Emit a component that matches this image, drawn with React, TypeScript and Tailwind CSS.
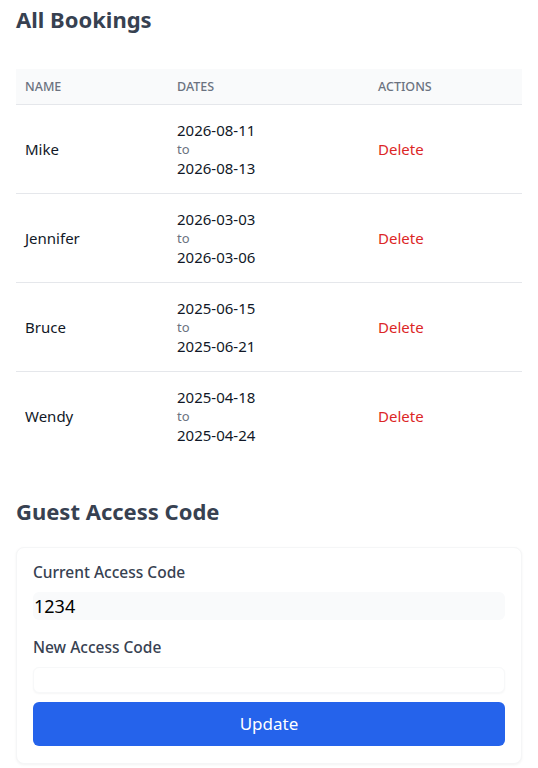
import React from "react";

const bookings = [
  { name: "Mike", from: "2026-08-11", to: "2026-08-13" },
  { name: "Jennifer", from: "2026-03-03", to: "2026-03-06" },
  { name: "Bruce", from: "2025-06-15", to: "2025-06-21" },
  { name: "Wendy", from: "2025-04-18", to: "2025-04-24" },
];

export default function App() {
  return (
    <div
      className="min-h-screen bg-white px-4 pt-[5px] text-[15px] text-[#111827]"
      style={{ fontFamily: '"Noto Sans", "Open Sans", sans-serif' }}
    >
      <h2 className="text-[22px] font-bold leading-[28px] text-[#374151]">All Bookings</h2>

      <table className="mt-[36px] w-full border-collapse table-fixed">
        <thead>
          <tr className="bg-[#f9fafb] border-b border-[#e5e7eb]">
            <th className="w-[153px] pl-[9px] pr-2 py-[10px] text-left text-[12.5px] font-medium leading-[15px] uppercase text-[#6b7280]">
              Name
            </th>
            <th className="w-[201px] px-2 py-[10px] text-left text-[12.5px] font-medium leading-[15px] uppercase text-[#6b7280]">
              Dates
            </th>
            <th className="px-2 py-[10px] text-left text-[12.5px] font-medium leading-[15px] uppercase text-[#6b7280]">
              Actions
            </th>
          </tr>
        </thead>
        <tbody>
          {bookings.map((b, i) => (
            <tr
              key={b.name}
              className={i < bookings.length - 1 ? "border-b border-[#e5e7eb]" : ""}
            >
              <td className="pl-[9px] pr-2 py-[15px] align-middle leading-5">{b.name}</td>
              <td className="px-2 py-[15px] align-middle">
                <div className="leading-5">{b.from}</div>
                <div className="text-[13px] leading-[18px] text-[#6b7280]">to</div>
                <div className="leading-5">{b.to}</div>
              </td>
              <td className="px-2 py-[15px] align-middle leading-5">
                <span className="text-[#dc2626]">Delete</span>
              </td>
            </tr>
          ))}
        </tbody>
      </table>

      <h2 className="mt-[37px] text-[22px] font-bold leading-[28px] text-[#374151]">
        Guest Access Code
      </h2>

      <div className="mt-[22px] rounded-lg border border-[#f5f6f7] bg-white px-[16px] pt-[14px] pb-[17px] shadow-[0_1px_3px_rgba(0,0,0,0.05)]">
        <label className="block text-[15.5px] font-medium leading-5 text-[#374151]">
          Current Access Code
        </label>
        <div className="mt-[10px] flex h-[28px] items-center rounded-md bg-[#f9fafb] pl-px text-lg text-black">
          1234
        </div>
        <label className="mt-[17px] block text-[15.5px] font-medium leading-5 text-[#374151]">
          New Access Code
        </label>
        <div className="mt-[10px] h-[26px] rounded-md border border-[#f7f8f9] bg-white shadow-[0_1px_2px_rgba(0,0,0,0.04)]"></div>
        <button className="mt-[9px] flex h-[44px] w-full items-center justify-center rounded-md bg-[#2563eb] text-[17px] text-white">
          Update
        </button>
      </div>
    </div>
  );
}
